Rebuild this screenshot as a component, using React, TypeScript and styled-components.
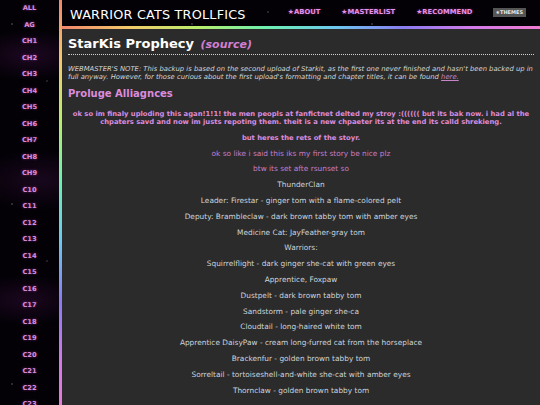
import styled, { createGlobalStyle } from 'styled-components';

const rainbow = '#f0866c, #f2c96a, #b9ee6c, #6cf0b0, #6cc8f0, #8a7cf0, #d27ae8, #f07ad0';

const GlobalStyle = createGlobalStyle`
  html, body {
    margin: 0;
    padding: 0;
  }
  body {
    background-color: #030106;
    background-image:
      radial-gradient(1px 1px at 12px 24px, rgba(255,255,255,0.55), transparent),
      radial-gradient(1px 1px at 47px 81px, rgba(255,255,255,0.4), transparent),
      radial-gradient(1px 1px at 33px 140px, rgba(255,255,255,0.35), transparent),
      radial-gradient(1px 1px at 88px 12px, rgba(255,255,255,0.5), transparent),
      radial-gradient(1px 1px at 140px 66px, rgba(255,255,255,0.35), transparent),
      radial-gradient(1px 1px at 171px 150px, rgba(255,255,255,0.4), transparent),
      radial-gradient(1.5px 1.5px at 120px 110px, rgba(230,150,255,0.5), transparent),
      radial-gradient(ellipse 60px 25px at 30px 55px, rgba(120,30,130,0.22), transparent),
      radial-gradient(ellipse 70px 30px at 40px 180px, rgba(110,30,120,0.2), transparent),
      radial-gradient(ellipse 60px 25px at 25px 300px, rgba(120,30,130,0.2), transparent);
    background-size: 180px 180px, 180px 180px, 180px 180px, 180px 180px, 180px 180px, 180px 180px, 180px 180px, 100% 405px, 100% 405px, 100% 405px;
    font-family: "DejaVu Sans", Verdana, sans-serif;
  }
`;

const Page = styled.div`
  display: grid;
  grid-template-columns: 59px 1fr;
  min-height: 100vh;
`;

const Sidebar = styled.nav`
  display: flex;
  flex-direction: column;
  align-items: center;
  padding-top: 2px;
`;

const ChapterLink = styled.a`
  display: block;
  height: 16.5px;
  line-height: 12px;
  font-size: 6.7px;
  font-weight: bold;
  color: #dc8cdc;
  text-decoration: none;
  text-shadow: 0 0 3px rgba(200, 80, 200, 0.6);
`;

const MainColumn = styled.div`
  border-left: 3px solid;
  border-image: linear-gradient(180deg, ${rainbow}) 1;
  display: flex;
  flex-direction: column;
`;

const Header = styled.header`
  height: 26px;
  display: flex;
  align-items: center;
  padding: 0 14px 0 8px;
  border-bottom: 3px solid;
  border-image: linear-gradient(90deg, ${rainbow}) 1;
`;

const SiteTitle = styled.div`
  color: #ffffff;
  font-size: 12.8px;
  letter-spacing: 0.2px;
  padding-top: 2px;
`;

const NavLinks = styled.div`
  margin-left: auto;
  display: flex;
  align-items: center;
  gap: 21px;
  padding-bottom: 2px;
`;

const NavLink = styled.a`
  color: #e690e6;
  font-size: 6.8px;
  font-weight: bold;
  text-decoration: none;
  text-shadow: 0 0 3px rgba(200, 80, 200, 0.5);
`;

const ThemesButton = styled.button`
  background: #555;
  color: #e8e8e8;
  border: none;
  font-family: inherit;
  font-size: 5px;
  font-weight: bold;
  padding: 2px 3px;
  height: 9px;
  line-height: 5px;
  margin-left: -1px;
`;

const Content = styled.main`
  flex: 1;
  background: #2b2b2b;
  padding: 6px 6px 20px 6px;
`;

const Title = styled.h1`
  margin: 0;
  font-size: 13px;
  line-height: 17px;
  color: #ffffff;
  font-weight: bold;
  padding-bottom: 1px;
  border-bottom: 1px dotted #d0d0d0;
`;

const Source = styled.a`
  font-style: italic;
  color: #d27fd2;
  font-size: 11px;
  text-decoration: none;
  margin-left: 2px;
`;

const Note = styled.p`
  margin: 10px 0 0;
  font-style: italic;
  font-size: 6.8px;
  line-height: 8px;
  color: #d4d4d4;

  a {
    color: #c884c8;
  }
`;

const SectionHeading = styled.h2`
  margin: 6px 0 10px;
  font-size: 10px;
  line-height: 13px;
  color: #dc8cdc;
`;

const Para = styled.p<{ $tone?: 'pink' | 'plain'; $bold?: boolean }>`
  margin: 7.8px 0;
  text-align: center;
  font-size: ${p => (p.$bold ? '6.8px' : '7.4px')};
  line-height: 8px;
  font-weight: ${p => (p.$bold ? 'bold' : 'normal')};
  color: ${p => (p.$tone === 'pink' ? (p.$bold ? '#dc8cdc' : '#c87ec8') : '#ccd5dc')};
`;

const chapters = [
  'ALL', 'AG', 'CH1', 'CH2', 'CH3', 'CH4', 'CH5', 'CH6', 'CH7', 'CH8', 'CH9',
  'C10', 'C11', 'C12', 'C13', 'C14', 'C15', 'C16', 'C17', 'C18', 'C19', 'C20',
  'C21', 'C22', 'C23',
];

const storyLines = [
  'ThunderClan',
  'Leader: Firestar - ginger tom with a flame-colored pelt',
  'Deputy: Brambleclaw - dark brown tabby tom with amber eyes',
  'Medicine Cat: JayFeather-gray tom',
  'Warriors:',
  'Squirrelflight - dark ginger she-cat with green eyes',
  'Apprentice, Foxpaw',
  'Dustpelt - dark brown tabby tom',
  'Sandstorm - pale ginger she-ca',
  'Cloudtail - long-haired white tom',
  'Apprentice DaisyPaw - cream long-furred cat from the horseplace',
  'Brackenfur - golden brown tabby tom',
  'Sorreltail - tortoiseshell-and-white she-cat with amber eyes',
  'Thornclaw - golden brown tabby tom',
];

export default function App() {
  return (
    <>
      <GlobalStyle />
      <Page>
        <Sidebar>
          {chapters.map(c => (
            <ChapterLink key={c} href="#">{c}</ChapterLink>
          ))}
        </Sidebar>
        <MainColumn>
          <Header>
            <SiteTitle>WARRIOR CATS TROLLFICS</SiteTitle>
            <NavLinks>
              <NavLink href="#">★ABOUT</NavLink>
              <NavLink href="#">★MASTERLIST</NavLink>
              <NavLink href="#">★RECOMMEND</NavLink>
              <ThemesButton>★THEMES</ThemesButton>
            </NavLinks>
          </Header>
          <Content>
            <Title>
              StarKis Prophecy <Source href="#">(source)</Source>
            </Title>
            <Note>
              WEBMASTER'S NOTE: This backup is based on the second upload of Starkit, as the first one never
              finished and hasn't been backed up in full anyway. However, for those curious about the first
              upload's formatting and chapter titles, it can be found <a href="#">here.</a>
            </Note>
            <SectionHeading>Proluge Alliagnces</SectionHeading>
            <Para $tone="pink" $bold>
              ok so im finaly uploding this agan!1!1! the men peopls at fanfictnet delted my stroy :((((((
              but its bak now. i had al the chpaters savd and now im justs repoting them. theit is a new
              chpaeter its at the end its calld shrekieng.
            </Para>
            <Para $tone="pink" $bold>but heres the rets of the stoyr.</Para>
            <Para $tone="pink">ok so like i said this iks my first story be nice plz</Para>
            <Para $tone="pink">btw its set afte rsunset so</Para>
            {storyLines.map(line => (
              <Para key={line}>{line}</Para>
            ))}
          </Content>
        </MainColumn>
      </Page>
    </>
  );
}
